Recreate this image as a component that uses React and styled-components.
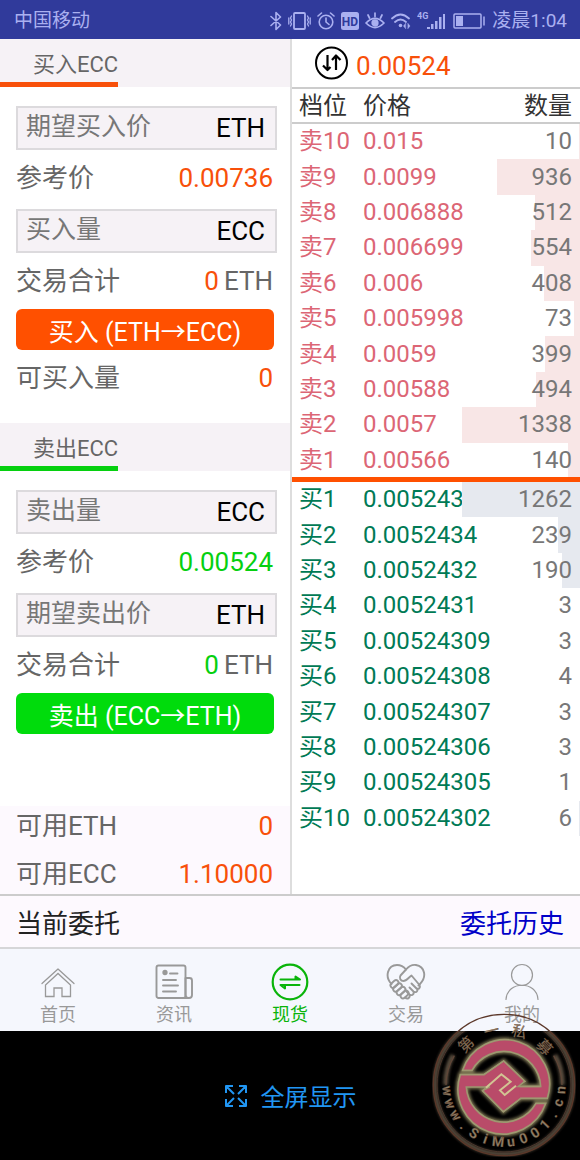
import React from "react";
import styled, { createGlobalStyle } from "styled-components";

const Global = createGlobalStyle`
  *, *::before, *::after { box-sizing: border-box; }
  body {
    margin: 0;
    background: #000;
    font-family: Roboto, "Noto Sans CJK SC", sans-serif;
    color: #666;
  }
  button, input { font: inherit; }
`;

const Page = styled.div`
  position: relative;
  min-height: 100vh;
  display: flex;
  flex-direction: column;
  overflow: hidden;
  background: #000;
`;

const StatusBar = styled.header`
  display: flex;
  align-items: center;
  justify-content: space-between;
  height: 39px;
  padding: 2px 13px 0 14px;
  background: #303a9b;
  color: #aab0f0;
  font-size: 19px;
  line-height: 37px;
`;

const StatusIcons = styled.div`
  display: flex;
  align-items: center;
  gap: 6px;
`;

const Main = styled.main`
  display: flex;
  background: #fff;
`;

const TradePanel = styled.div`
  flex: 0 0 50%;
  min-width: 0;
`;

const BookPanel = styled.section`
  flex: 1;
  min-width: 0;
  border-left: 2px solid #ddd;
`;

const Heading = styled.h2`
  margin: 0;
  height: 48px;
  background: #f6f2f6;
  font-size: 22px;
  font-weight: 400;
  line-height: 43px;

  span {
    display: inline-block;
    height: 48px;
    padding: 4px 0 0 33px;
    border-bottom: 5px solid ${(p) => p.$accent};
    vertical-align: top;
  }
`;

const Form = styled.form`
  padding: 19px 13px 0 16px;
`;

const Row = styled.div`
  display: flex;
  align-items: center;
  justify-content: space-between;
  height: ${(p) => (p.$compact ? 40 : 56)}px;
  padding-right: 4px;
  font-size: 26px;
  line-height: 40px;
`;

const Total = styled.span`
  display: flex;
  gap: 5px;
`;

const Amount = styled.span`
  color: ${(p) => p.$color};
`;

const Field = styled.label`
  display: flex;
  align-items: center;
  height: 44px;
  padding: 0 10px 0 8px;
  border: 2px solid #dcdadd;
  background: #f6f2f6;
  color: #000;
  font-size: 26px;

  ${Row} + & { margin-top: 3px; }

  input {
    flex: 1;
    min-width: 0;
    height: 40px;
    padding: 0 0 3px;
    border: 0;
    outline: 0;
    background: transparent;
    font-size: 25px;
  }
  input::placeholder { color: #777; opacity: 1; }
`;

const Submit = styled.button`
  display: block;
  width: calc(100% - 3px);
  height: 41px;
  padding: 6px 0 0;
  border: 0;
  border-radius: 6px;
  background: ${(p) => p.$color};
  color: #fff;
  font-size: 25px;
  line-height: 35px;
`;

const Spacer = styled.div`
  height: 17px;
`;

const Balances = styled.div`
  display: flex;
  flex-direction: column;
  gap: 8px;
  margin-top: 72px;
  padding: 0 13px 0 16px;
  background: #fdf9fe;
`;

const LastPrice = styled.div`
  display: flex;
  align-items: center;
  gap: 8px;
  height: 50px;
  padding-left: 23px;
  border-bottom: 2px solid #ccc;
  color: #f8500a;
  font-size: 26px;

  span { padding-top: 6px; }
`;

const RoundButton = styled.button`
  display: flex;
  padding: 0;
  border: 0;
  background: none;
  color: #000;
`;

const Book = styled.table`
  display: block;
  font-size: 24px;

  thead { display: block; }
  tr {
    position: relative;
    display: grid;
    grid-template-columns: 64px 1fr auto;
    align-items: center;
    padding: 0 8px 0 7px;
  }
  th, td { padding: 0; font-weight: 400; text-align: left; }
`;

const HeadRow = styled.tr`
  height: 35px;
  border-bottom: 2px solid #ccc;
  color: #333;
  line-height: 30px;
`;

const Orders = styled.tbody`
  display: grid;
  grid-auto-rows: 1fr;
  height: 354px;
  color: ${(p) => p.$color};
  line-height: 35px;

  & + & {
    position: relative;
    height: 358px;
    border-top: 4px solid #ff5000;
    box-shadow: 0 -1px 0 #ff5000;
  }
`;

const Quantity = styled.td`
  color: #777;
  span { position: relative; }
`;

const Depth = styled.i`
  position: absolute;
  top: 0;
  right: 0;
  bottom: 0;
  background: ${(p) => p.$color};
`;

const OrdersBar = styled.section`
  display: flex;
  align-items: center;
  justify-content: space-between;
  height: 55px;
  padding: 0 16px;
  border-top: 2px solid #ccc;
  border-bottom: 2px solid #d6d6d8;
  background: #fdf9fe;
  color: #222;
  font-size: 26px;

  h2 { margin: 0; font-size: 26px; font-weight: 400; }
  a { color: #0000c8; text-decoration: none; }
`;

const TabBar = styled.nav`
  display: grid;
  grid-template-columns: repeat(5, 1fr);
  height: 82px;
  background: #f5f7fd;
`;

const Tab = styled.a`
  display: flex;
  flex-direction: column;
  align-items: center;
  gap: 2px;
  padding-top: 14px;
  color: ${(p) => (p.$active ? "#0ab40a" : "#999")};
  font-size: 18px;
  line-height: 24px;
  text-decoration: none;
`;

const Bottom = styled.footer`
  display: flex;
  justify-content: center;
  flex: 1;
  min-height: 129px;
  background: #000;
`;

const FullScreen = styled.button`
  display: flex;
  align-items: center;
  gap: 13px;
  border: 0;
  background: none;
  color: #2196f3;
  font-size: 24px;
`;

const Stamp = styled.svg`
  position: absolute;
  right: 4px;
  bottom: 3px;
  pointer-events: none;
`;

const stroke = { fill: "none", stroke: "currentColor", strokeLinecap: "round", strokeLinejoin: "round" };

const StatusGlyphs = () => (
  <>
    <svg width="12" height="20" viewBox="0 0 12 20" {...stroke} strokeWidth="1.6">
      <path d="M1 5.5 10.5 14 6 18.5V1.5L10.5 6 1 14.5" />
    </svg>
    <svg width="23" height="20" viewBox="0 0 23 20" {...stroke} strokeWidth="1.8">
      <rect x="6" y="2" width="11" height="16" rx="1" />
      <path d="M3.5 5 2.5 7l1 2-1 2 1 2-1 2M.8 7v6M19.5 5l1 2-1 2 1 2-1 2 1 2M22.2 7v6" strokeWidth="1.3" />
    </svg>
    <svg width="18" height="20" viewBox="0 0 18 20" {...stroke} strokeWidth="1.6">
      <circle cx="9" cy="11" r="6.8" />
      <path d="M9 7v4l3 2.5M1 5l3.500-3M17 5l-3.500-3" />
    </svg>
    <svg width="18" height="18" viewBox="0 0 18 18">
      <rect width="18" height="18" rx="2.5" fill="currentColor" />
      <text x="9" y="13.5" textAnchor="middle" fontSize="12" fontWeight="700" fill="#303a9b">HD</text>
    </svg>
    <svg width="20" height="20" viewBox="0 0 20 20" {...stroke} strokeWidth="1.7">
      <path d="M1 12Q10 3 19 12 10 21 1 12ZM10 5.500V2M4.500 7 3 4M15.500 7 17 4" />
      <circle cx="10" cy="12" r="2.8" fill="currentColor" />
    </svg>
    <svg width="20" height="20" viewBox="0 0 20 20" {...stroke} strokeWidth="1.8">
      <path d="M1 7.500Q9.500-.500 18 7.500M4 11Q9.500 6 15 11" />
      <circle cx="9.5" cy="14.5" r="1.8" fill="currentColor" stroke="none" />
      <path d="m14.500 12.500-2 2.500 2 2.500zM17 12.500l2 2.500-2 2.500z" fill="currentColor" strokeWidth="0.5" />
    </svg>
    <svg width="29" height="20" viewBox="0 0 29 20" fill="currentColor">
      <text x="0" y="8" fontSize="9" fontWeight="700">4G</text>
      <path d="M10 16h3v2h-3zM14 13h2.500v5H14zM18 10h2.500v8H18zM22 6h2.500v12H22zM26 3h2v15h-2z" />
    </svg>
    <svg width="34" height="18" viewBox="0 0 34 18" {...stroke} strokeWidth="1.5">
      <rect x="2" y="2" width="27" height="14" rx="1" />
      <path d="M4 4h7v10H4z" fill="currentColor" stroke="none" />
      <path d="M32 5v8" />
    </svg>
  </>
);

const SwapVertical = () => (
  <svg width="33" height="34" viewBox="0 0 33 34" {...stroke} strokeWidth="2">
    <circle cx="16.5" cy="17" r="15.5" />
    <path d="M12.500 9v15M8 19.500l4.500 4.500 3-3M21 24V9.500M17 14l4-4.500 4.500 4.500" strokeLinecap="butt" strokeWidth="2.2" />
  </svg>
);

const HomeIcon = () => (
  <svg width="38" height="38" viewBox="0 0 38 38" {...stroke} strokeWidth="1.3">
    <path d="M3 20.500 19 6l16 14.500" />
    <path d="M6.500 22v11.500H15v-8.500h8v8.500h8.500V22L19 10.500z" strokeLinejoin="miter" />
  </svg>
);

const NewsIcon = () => (
  <svg width="38" height="38" viewBox="0 0 38 38" {...stroke} strokeWidth="1.9">
    <rect x="1.5" y="2.5" width="29" height="32.5" rx="2" />
    <path d="M30.500 15h4a2.500 2.500 0 0 1 2.500 2.500V32a3 3 0 0 1-3 3h-6M30.500 15v17q0 3 3 3" />
    <path d="M15 10.500h7.500M8 17h13M8 22.500h15M8 28.500h13" />
    <circle cx="10" cy="9.5" r="1.7" fill="currentColor" />
  </svg>
);

const SpotIcon = () => (
  <svg width="38" height="38" viewBox="0 0 38 38" {...stroke} strokeWidth="2.2">
    <circle cx="19" cy="19" r="17.3" />
    <path d="M9.500 16.500H29l-4.500-3v3M28.500 22H9.500l4.500 3.500V22" strokeWidth="2" />
  </svg>
);

const HandshakeIcon = () => (
  <svg width="40" height="38" viewBox="0 0 40 38" {...stroke} strokeWidth="1.9">
    <path d="M5.500 21C-1.500 14 1.500 2 11 2c4 0 7 2 9 4.500C23 3 27 1.500 30 2c9 1.500 11 12 4 19l-1.500 1.500" />
    <path d="M20 6.500 14.500 12.500c-1.500 2.500 0 5.500 3 5.500s5-3.500 8-5.500l8 9.500c1.500 3-1 4.500-3 3.500l-5-5" />
    <path d="M31 25.500c1.500 3-1.500 4.500-3.500 3l-4-4M27.500 28.500c1 3-2 4.500-4 3l-3-3M23.500 31.500c1 3.500-2 5-4.500 3" />
    <rect x="4" y="18.5" width="9" height="5" rx="2.5" transform="rotate(-42 8.5 21)" />
    <rect x="6.500" y="22" width="10" height="5" rx="2.5" transform="rotate(-42 11.5 24.5)" />
    <rect x="10" y="25.5" width="10" height="5" rx="2.5" transform="rotate(-42 15 28)" />
    <rect x="14" y="29" width="9" height="5" rx="2.5" transform="rotate(-42 18.5 31.5)" />
  </svg>
);

const PersonIcon = () => (
  <svg width="38" height="38" viewBox="0 0 38 38" {...stroke} strokeWidth="1.2">
    <circle cx="19" cy="12" r="10.5" />
    <path d="M3 36.500C4 17.500 34 17.500 35 36.500" />
  </svg>
);

const ExpandIcon = () => (
  <svg width="24" height="24" viewBox="0 0 24 24" {...stroke} strokeWidth="2" strokeLinecap="butt">
    <path d="M2 9V2h7M2 2l8 8M15 2h7v7M22 2l-8 8M2 15v7h7M2 22l8-8M22 15v7h-7M22 22l-8-8" />
  </svg>
);

const stampTop = [["第", -43], ["一", -13], ["私", 16], ["募", 47]];
const stampSite = [..."www.SiMu001.cn"];

const RING =
  "M98 180A132 132 0 0 1 352 264H272L220 304 158 241 214 190 221 228H332A110 110 0 0 0 126 180Z" +
  "M347 279A133 133 0 0 1 91 193H162L221 152 284 213 222 240 166 230H109A112 112 0 0 0 318 279Z";

const StampArt = () => (
  <Stamp width="144" height="144" viewBox="6 8 432 432" fill="none" aria-hidden="true">
    <defs>
      <clipPath id="stampDark"><rect x="0" y="63" width="450" height="390" /></clipPath>
      <filter id="stampGlow" x="-10%" y="-10%" width="120%" height="120%">
        <feGaussianBlur stdDeviation="4" />
      </filter>
    </defs>
    <g clipPath="url(#stampDark)">
      <circle cx="222" cy="224" r="207" stroke="#5c4f40" strokeWidth="12" filter="url(#stampGlow)" />
      <path d="M69 134A178 178 0 0 0 47 224M375 134a178 178 0 0 1 22 90" stroke="#5c5040" strokeWidth="14" filter="url(#stampGlow)" />
      <path d="M73 136A174 174 0 0 0 48 224M371 136a174 174 0 0 1 25 88" stroke="#5f4638" strokeWidth="4" />
      <circle cx="222" cy="224" r="201" stroke="#4c372d" strokeWidth="3" />
      <path d={RING} stroke="#77704f" strokeWidth="14" filter="url(#stampGlow)" />
    </g>
    <circle cx="222" cy="224" r="212" stroke="#5c382a" strokeWidth="4" />
    <path d={RING} stroke="#9d9870" strokeWidth="5" fill="#b94b69" />
    <path d="M165 194 221 155 281 213 268 228 270 262 220 300 161 241 181 222z" fill="#b94b69" />
    <path d="M162 193 221 152 284 213 264 229H332M166 230H180L158 241 220 304 272 264H350" stroke="#9d9870" strokeWidth="4" />
    <path d="M168 232 214 192 242 214 210 240 224 254 258 226" stroke="#d2c493" strokeWidth="6" />
    <g textAnchor="middle" fill="#8f8066" stroke="#5c382a" strokeWidth="1">
      {stampTop.map(([char, angle]) => (
        <text key={char} fontSize="46" transform={`rotate(${angle} 222 224)`} x="222" y="74">{char}</text>
      ))}
      {stampSite.map((char, i) => (
        <text
          key={i}
          fontSize="42"
          fontWeight="700"
          transform={`rotate(${84 - i * 13} 222 224)`}
          x="222"
          y="409"
        >
          {char}
        </text>
      ))}
    </g>
  </Stamp>
);

const ORANGE = "#f8500a";
const GREEN = "#06d010";

const sells = [
  ["卖10", "0.015", 10],
  ["卖9", "0.0099", 936],
  ["卖8", "0.006888", 512],
  ["卖7", "0.006699", 554],
  ["卖6", "0.006", 408],
  ["卖5", "0.005998", 73],
  ["卖4", "0.0059", 399],
  ["卖3", "0.00588", 494],
  ["卖2", "0.0057", 1338],
  ["卖1", "0.00566", 140],
];

const buys = [
  ["买1", "0.0052435", 1262],
  ["买2", "0.0052434", 239],
  ["买3", "0.0052432", 190],
  ["买4", "0.0052431", 3],
  ["买5", "0.00524309", 3],
  ["买6", "0.00524308", 4],
  ["买7", "0.00524307", 3],
  ["买8", "0.00524306", 3],
  ["买9", "0.00524305", 1],
  ["买10", "0.00524302", 6],
];

const OrderRows = ({ orders, color, depthColor }) => {
  const max = Math.max(...orders.map((o) => o[2]));
  return (
    <Orders $color={color}>
      {orders.map(([level, price, qty]) => (
        <tr key={level}>
          <td>{level}</td>
          <td>{price}</td>
          <Quantity>
            <Depth $color={depthColor} style={{ width: `${(qty / max) * 41}%` }} />
            <span>{qty}</span>
          </Quantity>
        </tr>
      ))}
    </Orders>
  );
};

const InputField = ({ name, placeholder, unit }) => (
  <Field>
    <input name={name} placeholder={placeholder} inputMode="decimal" />
    {unit}
  </Field>
);

const tabs = [
  ["首页", HomeIcon],
  ["资讯", NewsIcon],
  ["现货", SpotIcon],
  ["交易", HandshakeIcon],
  ["我的", PersonIcon],
];

export default function App() {
  return (
    <Page>
      <Global />
      <StatusBar>
        <span>中国移动</span>
        <StatusIcons>
          <StatusGlyphs />
          <span>凌晨1:04</span>
        </StatusIcons>
      </StatusBar>
      <Main>
        <TradePanel>
          <Heading $accent={ORANGE}><span>买入ECC</span></Heading>
          <Form>
            <InputField name="buyPrice" placeholder="期望买入价" unit="ETH" />
            <Row><span>参考价</span><Amount $color={ORANGE}>0.00736</Amount></Row>
            <InputField name="buyAmount" placeholder="买入量" unit="ECC" />
            <Row><span>交易合计</span><Total><Amount $color={ORANGE}>0</Amount>ETH</Total></Row>
            <Submit type="button" $color="#ff5000">买入 (ETH→ECC)</Submit>
            <Row><span>可买入量</span><Amount $color={ORANGE}>0</Amount></Row>
          </Form>
          <Spacer />
          <Heading $accent={GREEN}><span>卖出ECC</span></Heading>
          <Form>
            <InputField name="sellAmount" placeholder="卖出量" unit="ECC" />
            <Row><span>参考价</span><Amount $color={GREEN}>0.00524</Amount></Row>
            <InputField name="sellPrice" placeholder="期望卖出价" unit="ETH" />
            <Row><span>交易合计</span><Total><Amount $color={GREEN}>0</Amount>ETH</Total></Row>
            <Submit type="button" $color="#00dc0c">卖出 (ECC→ETH)</Submit>
          </Form>
          <Balances>
            <Row $compact><span>可用ETH</span><Amount $color={ORANGE}>0</Amount></Row>
            <Row $compact><span>可用ECC</span><Amount $color={ORANGE}>1.10000</Amount></Row>
          </Balances>
        </TradePanel>
        <BookPanel>
          <LastPrice>
            <RoundButton type="button" aria-label="切换"><SwapVertical /></RoundButton>
            <span>0.00524</span>
          </LastPrice>
          <Book>
            <thead>
              <HeadRow><th>档位</th><th>价格</th><th>数量</th></HeadRow>
            </thead>
            <OrderRows orders={sells} color="#dc6675" depthColor="#f8e6e6" />
            <OrderRows orders={buys} color="#007a55" depthColor="#e6e9ef" />
          </Book>
        </BookPanel>
      </Main>
      <OrdersBar>
        <h2>当前委托</h2>
        <a href="#history">委托历史</a>
      </OrdersBar>
      <TabBar>
        {tabs.map(([label, Icon]) => (
          <Tab key={label} href={`#${label}`} $active={label === "现货"}>
            <Icon />
            {label}
          </Tab>
        ))}
      </TabBar>
      <Bottom>
        <FullScreen type="button"><ExpandIcon />全屏显示</FullScreen>
      </Bottom>
      <StampArt />
    </Page>
  );
}
